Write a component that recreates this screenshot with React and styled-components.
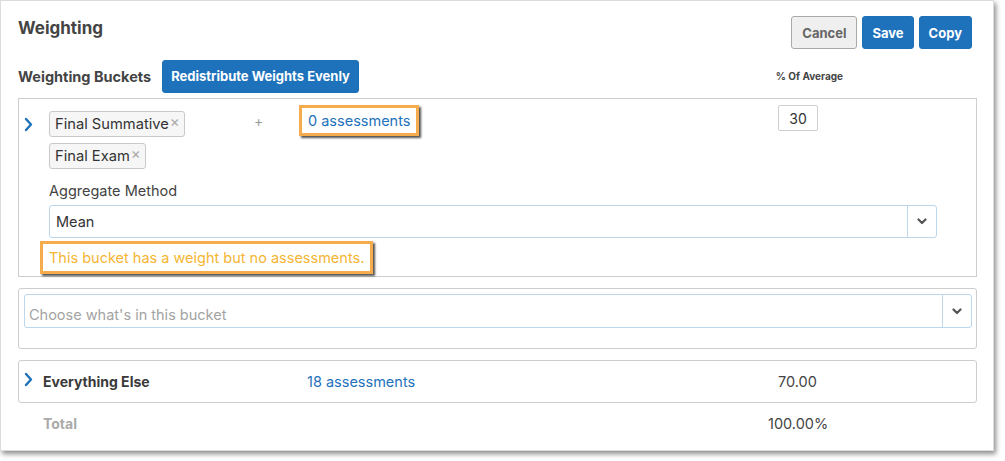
import React from "react"
import styled, { createGlobalStyle } from "styled-components"

const GlobalStyle = createGlobalStyle`
  body {
    margin: 0;
    background: #fff;
    font-family: Inter, "Noto Sans", "Liberation Sans", sans-serif;
    color: #444;
  }
`

const Page = styled.div`
  width: 1005px;
  height: 461px;
  background: #fff;
`

const Panel = styled.div`
  box-sizing: border-box;
  width: 994px;
  height: 451px;
  border: 1px solid #dcdcdc;
  background: #fff;
  box-shadow: 2px 3px 5px rgba(0, 0, 0, 0.45);
  padding: 0 16px 0 17px;
`

const Header = styled.div`
  display: flex;
  justify-content: space-between;
  align-items: flex-start;
  padding-top: 15px;
`

const Title = styled.h2`
  margin: 2px 0 0;
  font-size: 17px;
  font-weight: 700;
  color: #444;
  line-height: 20px;
`

const Actions = styled.div`
  display: flex;
  gap: 5px;
  margin-right: 5px;
`

const Button = styled.button`
  height: 33px;
  padding: 0 ${p => p.$padX || 9}px;
  border-radius: 3px;
  font-family: inherit;
  font-size: 13px;
  font-weight: 700;
  cursor: pointer;
  border: 1px solid ${p => (p.$secondary ? "#a9a9a9" : "#1e70b6")};
  background: ${p => (p.$secondary ? "#efefef" : "#1e72bb")};
  color: ${p => (p.$secondary ? "#666" : "#fff")};
`

const BucketsHeader = styled.div`
  display: flex;
  align-items: center;
  margin-top: 10px;
  height: 34px;
`

const SubTitle = styled.span`
  font-size: 14.5px;
  font-weight: 700;
  color: #444;
  margin-right: 11px;
`

const ColumnLabel = styled.span`
  margin-left: auto;
  margin-right: 134px;
  font-size: 10px;
  font-weight: 700;
  color: #444;
`

const Card = styled.div`
  box-sizing: border-box;
  border: 1px solid #cdcdcd;
  border-radius: ${p => (p.$round ? 3 : 0)}px;
  margin-top: ${p => p.$gap || 0}px;
`

const BucketBody = styled.div`
  display: grid;
  grid-template-columns: 25px 1fr;
  padding: 6px 39px 2px 5px;
`

const Chevron = styled.svg`
  width: 9px;
  height: 15px;
  margin-top: ${p => p.$top || 0}px;
  color: #1e72bb;
`

const TopRow = styled.div`
  display: grid;
  grid-template-columns: 201px 49px 479px auto;
  align-items: start;
`

const Tags = styled.div`
  display: flex;
  flex-direction: column;
  align-items: flex-start;
  gap: 6px;
  margin-top: 6px;
`

const Tag = styled.span`
  display: inline-flex;
  align-items: center;
  box-sizing: border-box;
  height: 26px;
  padding: 0 4px 0 5px;
  border: 1px solid #c9c9c9;
  border-radius: 3px;
  background: #f6f6f6;
  font-size: 14.7px;
  color: #333;
`

const Remove = styled.span`
  color: #aaa;
  font-size: 15px;
  margin-left: 1px;
  margin-top: -5px;
`

const Plus = styled.span`
  margin-top: 8px;
  padding-left: 4px;
  color: #999;
  font-size: 14px;
  line-height: 16px;
`

const Highlight = styled.span`
  display: inline-block;
  justify-self: start;
  box-sizing: border-box;
  border: 3px solid #f6ac4c;
  box-shadow: 2px 2px 2px rgba(40, 40, 40, 0.8);
  background: #fff;
  padding: ${p => p.$pad || "3px 5px"};
  margin-left: ${p => p.$shift || 0}px;
  margin-top: ${p => p.$top || 0}px;
  line-height: 19px;
`

const Link = styled.a`
  color: #1e72bb;
  font-size: 14.5px;
  text-decoration: none;
`

const WeightInput = styled.span`
  display: inline-flex;
  align-items: center;
  justify-content: center;
  box-sizing: border-box;
  width: 40px;
  height: 26px;
  border: 1px solid #cfcfcf;
  border-radius: 2px;
  font-size: 14px;
  color: #333;
`

const FieldLabel = styled.div`
  margin-top: 12px;
  line-height: 20px;
  font-size: 14.5px;
  color: #444;
`

const Select = styled.div`
  display: flex;
  box-sizing: border-box;
  height: ${p => p.$h || 33}px;
  margin-top: ${p => p.$top || 0}px;
  border: 1px solid #bcd7ec;
  border-radius: 3px;
  background: #fff;
`

const SelectValue = styled.div`
  flex: 1;
  display: flex;
  align-items: center;
  padding-left: ${p => p.$pad || 6}px;
  padding-top: ${p => (p.$placeholder ? 6 : 0)}px;
  font-size: 14.5px;
  color: ${p => (p.$placeholder ? "#a3a3a3" : "#333")};
`

const SelectToggle = styled.div`
  width: 28px;
  display: flex;
  align-items: center;
  justify-content: center;
  border-left: 1px solid #bcd7ec;
  color: #555;
`

const Warning = styled.span`
  color: #f5b532;
  font-size: 14.5px;
`

const EmptyCard = styled.div`
  padding: 5px 4px 20px 5px;
`

const Row = styled.div`
  display: grid;
  grid-template-columns: ${p => p.$cols};
  align-items: center;
  height: ${p => p.$h}px;
  padding-left: ${p => p.$pad || 0}px;
`

const Name = styled.span`
  font-size: 14px;
  font-weight: 700;
  color: ${p => (p.$muted ? "#aaa" : "#3a3a3a")};
`

const Value = styled.span`
  font-size: 14.5px;
  color: #444;
`

const ChevronRight = ({ top }) => (
  <Chevron $top={top} viewBox="0 0 9 15">
    <path d="M2 2l5 5.5L2 13" fill="none" stroke="currentColor" strokeWidth="2.4" strokeLinecap="round" strokeLinejoin="round" />
  </Chevron>
)

const CaretDown = () => (
  <svg width="10" height="7" viewBox="0 0 10 7">
    <path d="M1.5 1.5L5 5l3.5-3.5" fill="none" stroke="currentColor" strokeWidth="2.2" strokeLinecap="round" strokeLinejoin="round" />
  </svg>
)

const App = () => (
  <Page>
    <GlobalStyle />
    <Panel>
      <Header>
        <Title>Weighting</Title>
        <Actions>
          <Button $secondary $padX={10}>Cancel</Button>
          <Button>Save</Button>
          <Button>Copy</Button>
        </Actions>
      </Header>

      <BucketsHeader>
        <SubTitle>Weighting Buckets</SubTitle>
        <Button $padX={8}>Redistribute Weights Evenly</Button>
        <ColumnLabel>% Of Average</ColumnLabel>
      </BucketsHeader>

      <Card $gap={5}>
        <BucketBody>
          <ChevronRight top={12} />
          <div>
            <TopRow>
              <Tags>
                <Tag>Final Summative<Remove>×</Remove></Tag>
                <Tag>Final Exam<Remove>×</Remove></Tag>
              </Tags>
              <Plus>+</Plus>
              <Highlight $pad="3px 6px 3px 6px">
                <Link href="#">0 assessments</Link>
              </Highlight>
              <WeightInput>30</WeightInput>
            </TopRow>
            <FieldLabel>Aggregate Method</FieldLabel>
            <Select $top={4}>
              <SelectValue>Mean</SelectValue>
              <SelectToggle><CaretDown /></SelectToggle>
            </Select>
            <Highlight $shift={-9} $top={3} $pad="4px 6px 4px 6px">
              <Warning>This bucket has a weight but no assessments.</Warning>
            </Highlight>
          </div>
        </BucketBody>
      </Card>

      <Card $gap={11} $round>
        <EmptyCard>
          <Select $h={34}>
            <SelectValue $placeholder $pad={4}>Choose what's in this bucket</SelectValue>
            <SelectToggle><CaretDown /></SelectToggle>
          </Select>
        </EmptyCard>
      </Card>

      <Card $gap={11} $round>
        <Row $cols="19px 264px 471px auto" $h={41} $pad={5}>
          <ChevronRight top={-5} />
          <Name>Everything Else</Name>
          <Link href="#">18 assessments</Link>
          <Value>70.00</Value>
        </Row>
      </Card>

      <Row $cols="725px auto" $h={40} $pad={25}>
        <Name $muted>Total</Name>
        <Value>100.00%</Value>
      </Row>
    </Panel>
  </Page>
)

export default App
